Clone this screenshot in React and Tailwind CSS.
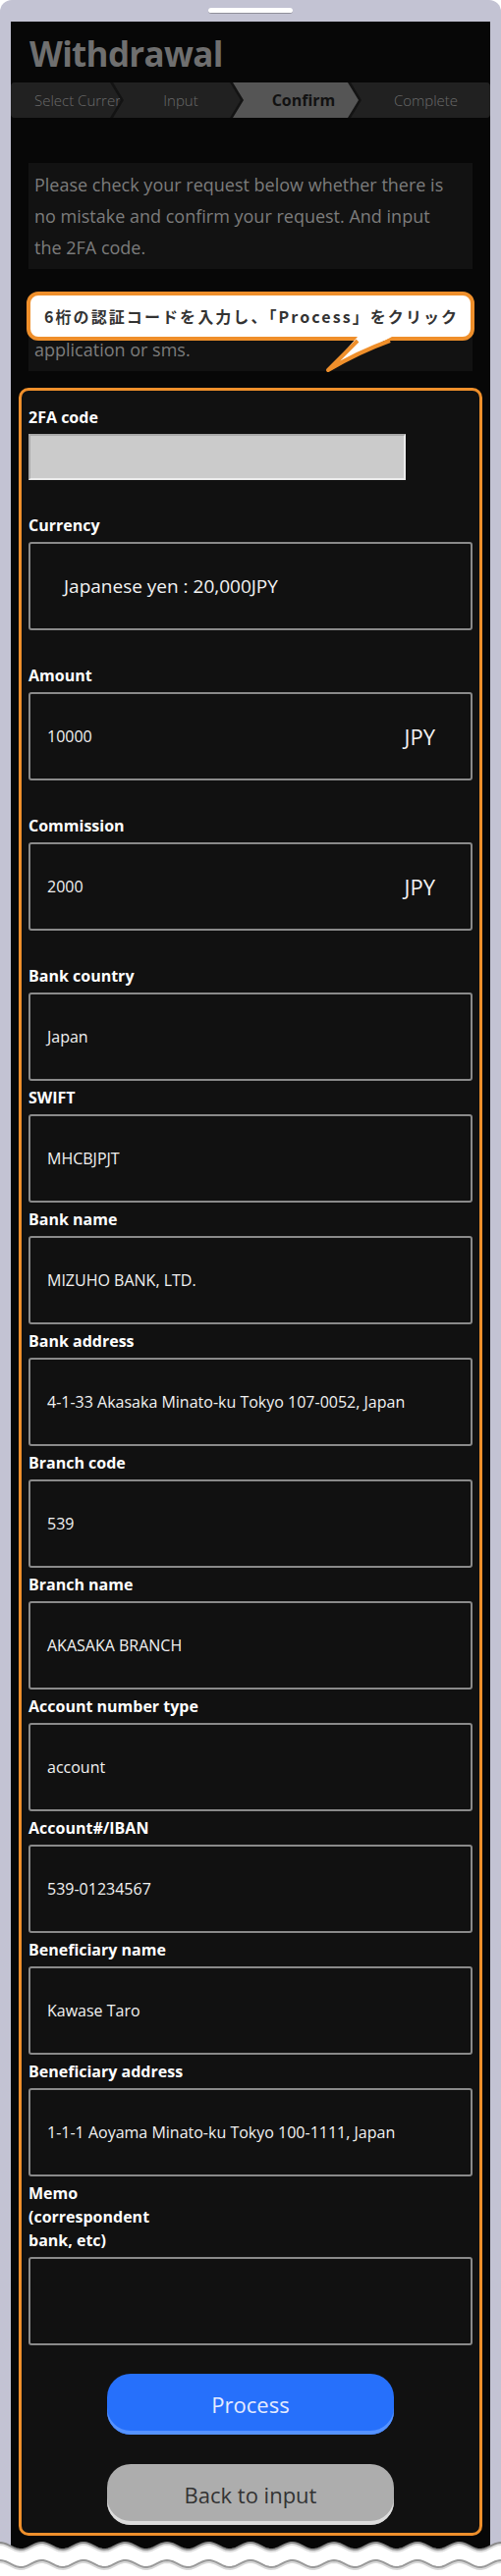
import React from "react";

const wave = (c, a, phase = 0) => {
  let d = `M0 ${(c - a * Math.cos(phase)).toFixed(2)}`;
  for (let x = 2; x <= 510; x += 2) {
    d += ` L${x} ${(c - a * Math.cos((2 * Math.PI * x) / 42.5 + phase)).toFixed(2)}`;
  }
  return d;
};

const steps = [
  {
    label: "Select Currency",
    cls: "w-[112px] justify-start pl-[24px] [clip-path:polygon(0_0,calc(100%_-_11px)_0,100%_50%,calc(100%_-_11px)_100%,0_100%)]",
  },
  {
    label: "Input",
    cls: "w-[130px] -ml-[8px] justify-center pl-[8px] [clip-path:polygon(0_0,calc(100%_-_11px)_0,100%_50%,calc(100%_-_11px)_100%,0_100%,11px_50%)]",
  },
  {
    label: "Confirm",
    active: true,
    cls: "w-[128px] -ml-[8px] justify-center pl-[16px] [clip-path:polygon(0_0,calc(100%_-_11px)_0,100%_50%,calc(100%_-_11px)_100%,0_100%,11px_50%)]",
  },
  {
    label: "Complete",
    cls: "flex-1 -ml-[8px] justify-center pl-[11px] [clip-path:polygon(0_0,100%_0,100%_100%,0_100%,11px_50%)]",
  },
];

const bankFields = [
  ["SWIFT", "MHCBJPJT"],
  ["Bank name", "MIZUHO BANK, LTD."],
  ["Bank address", "4-1-33 Akasaka Minato-ku Tokyo 107-0052, Japan"],
  ["Branch code", "539"],
  ["Branch name", "AKASAKA BRANCH"],
  ["Account number type", "account"],
  ["Account#/IBAN", "539-01234567"],
  ["Beneficiary name", "Kawase Taro"],
  ["Beneficiary address", "1-1-1 Aoyama Minato-ku Tokyo 100-1111, Japan"],
];

function Label({ children, className = "" }) {
  return (
    <div className={`mb-[5px] text-[16px] font-bold leading-[24px] text-white ${className}`}>
      {children}
    </div>
  );
}

function Field({ label, value, unit, className = "" }) {
  return (
    <div className={className}>
      <Label>{label}</Label>
      <div className="flex h-[90px] items-center justify-between rounded-[3px] border-2 border-[#8a8a8a] pl-[17px] pr-[36px] text-[16px] text-[#f2f2f2]">
        <span>{value}</span>
        {unit && <span className="text-[22px]">{unit}</span>}
      </div>
    </div>
  );
}

export default function App() {
  return (
    <div className="w-[510px] font-['Open_Sans','Noto_Sans_CJK_JP',sans-serif]">
      <div className="rounded-t-[12px] bg-[#c3c3d3] px-[11px]">
        <div className="flex h-[22px] justify-center pt-[8px]">
          <div className="h-[6px] w-[86px] rounded-full border-b border-[#8f8f9a] bg-white" />
        </div>

        <div className="bg-[#070707] pb-[1px]">
          <h1 className="mb-[12px] pl-[19px] pt-[15px] text-[35px] font-bold leading-[35px] tracking-[-0.02em] text-[#6f6f6f]">
            Withdrawal
          </h1>

          <div className="flex h-[36px] overflow-hidden rounded-[4px] bg-[#131313]">
            {steps.map((s) => (
              <div
                key={s.label}
                className={`flex shrink-0 items-center overflow-hidden whitespace-nowrap ${s.cls} ${
                  s.active
                    ? "bg-[#555555] text-[16px] font-bold text-[#111]"
                    : "bg-[#212121] text-[15px] font-light text-[#6b6b6b]"
                }`}
              >
                {s.label}
              </div>
            ))}
          </div>

          <div className="mx-[18px] mt-[46px] bg-[#121212] py-[6px] pl-[6px] pr-[20px] text-[18px] leading-[32px] text-[#7c7c7c]">
            Please check your request below whether there is no mistake and confirm your request. And input the 2FA code.
          </div>

          <div className="relative mx-[18px] mt-[28px]">
            <div className="h-[76px] overflow-hidden bg-[#121212] px-[6px] py-[6px] text-[18px] leading-[32px] text-[#7c7c7c]">
              <div className="whitespace-nowrap">Please input the code of authentication</div>
              <div>application or sms.</div>
            </div>
            <div className="absolute -left-[2px] -right-[2px] -top-[5px] flex h-[50px] items-center whitespace-nowrap rounded-[12px] border-4 border-[#ef8f2b] bg-white pl-[14px] font-['Noto_Sans_CJK_JP',sans-serif] text-[16px] font-bold tracking-[0.13em] text-[#333]">
              6桁の認証コードを入力し、「Process」をクリック
              <svg
                width="80"
                height="40"
                viewBox="0 0 80 40"
                className="absolute left-[295px] top-[42px]"
              >
                <path d="M38 0 L8 34 L73 0 Z" fill="#fff" />
                <path
                  d="M38 4 L8 34 Q38 16 71 4"
                  fill="none"
                  stroke="#ef8f2b"
                  strokeWidth="4"
                  strokeLinejoin="round"
                />
              </svg>
            </div>
          </div>

          <div className="mx-[8px] mt-[17px] rounded-[10px] border-[3px] border-[#ef8f2b] bg-[#111111] px-[7px] pb-[8px] pt-[15px]">
            <div className="mb-[34px]">
              <Label>2FA code</Label>
              <div className="h-[47px] w-[384px] border-2 border-b-[#ececec] border-l-[#a9a9a9] border-r-[#ececec] border-t-[#a9a9a9] bg-[#cbcbcb]" />
            </div>

            <div className="mb-[34px]">
              <Label>Currency</Label>
              <div className="flex h-[90px] items-center rounded-[3px] border-2 border-[#8a8a8a] pl-[34px] text-[19px] text-[#f2f2f2]">
                Japanese yen : 20,000JPY
              </div>
            </div>

            <Field label="Amount" value="10000" unit="JPY" className="mb-[34px]" />
            <Field label="Commission" value="2000" unit="JPY" className="mb-[34px]" />
            <Field label="Bank country" value="Japan" />

            {bankFields.map(([l, v]) => (
              <Field key={l} label={l} value={v} className="mt-[5px]" />
            ))}

            <div className="mt-[5px]">
              <Label className="w-[140px]">Memo (correspondent bank, etc)</Label>
              <div className="h-[90px] rounded-[3px] border-2 border-[#8a8a8a]" />
            </div>

            <div className="mt-[29px] flex flex-col items-center gap-[30px]">
              <button className="h-[62px] w-[292px] rounded-[24px] bg-[#2670fb] text-[22px] text-[#e4ebff] shadow-[inset_0_-4px_0_#5592ff]">
                Process
              </button>
              <button className="h-[62px] w-[292px] rounded-[24px] bg-[#adadad] text-[22px] text-[#333] shadow-[inset_0_-4px_0_#dcdcdc]">
                Back to input
              </button>
            </div>
          </div>
        </div>
      </div>

      <svg width="510" height="40" viewBox="0 0 510 40" className="block">
        <rect x="0" y="0" width="11" height="40" fill="#c3c3d3" />
        <rect x="499" y="0" width="11" height="40" fill="#c3c3d3" />
        <rect x="11" y="0" width="488" height="40" fill="#070707" />
        <path d={wave(9.5, 3.5) + " L510 40 L0 40 Z"} fill="#ffffff" />
        <path d={wave(11, 3.5)} fill="none" stroke="#dcdcdc" strokeWidth="3" />
        <path d={wave(9.5, 3.5)} fill="none" stroke="#8a8a8a" strokeWidth="2" />
        <path d={wave(29, 3.5)} fill="none" stroke="#d8d8d8" strokeWidth="3" />
        <path d={wave(27.5, 3.5)} fill="none" stroke="#9a9a9a" strokeWidth="2" />
      </svg>
    </div>
  );
}
